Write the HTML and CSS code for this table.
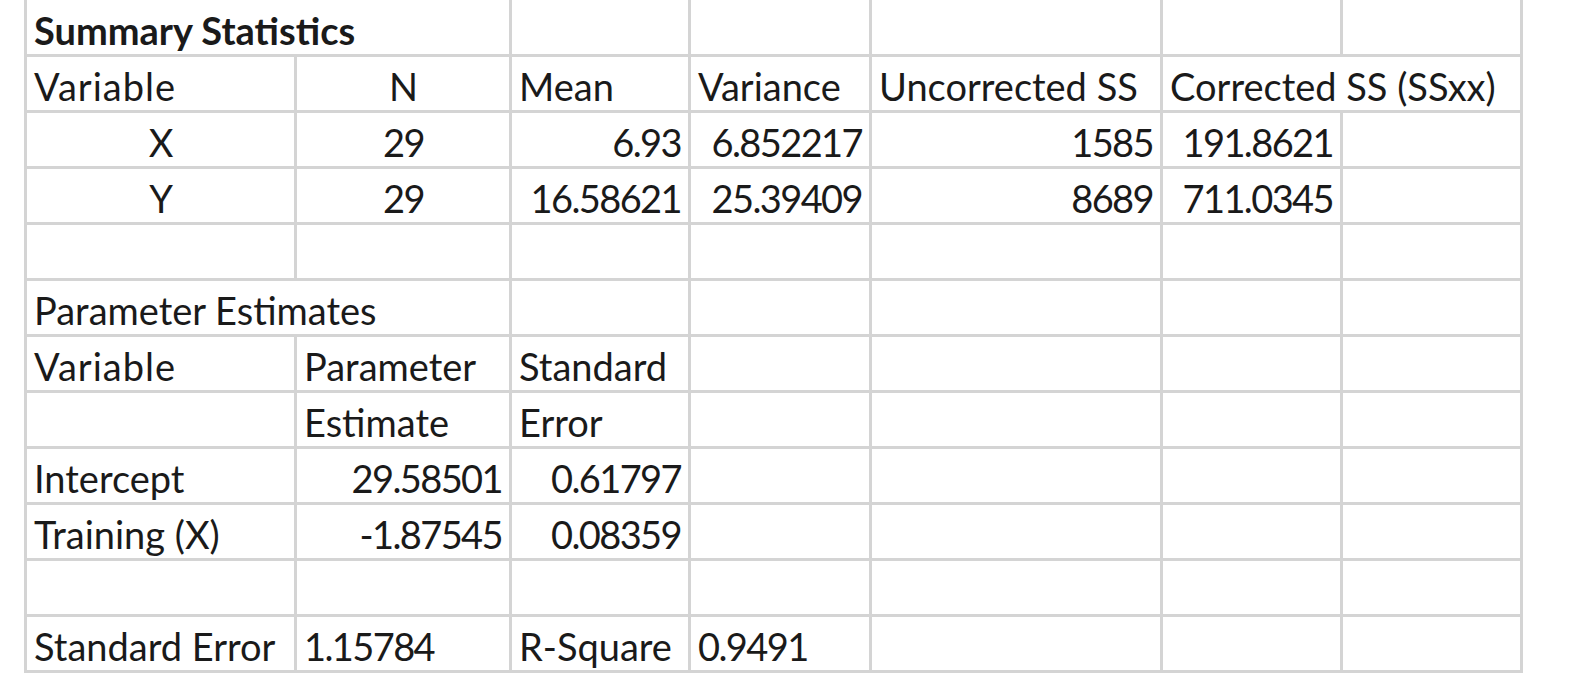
FILE: index.html
```html
<!DOCTYPE html>
<html>
<head>
<meta charset="utf-8">
<link rel="stylesheet" href="styles.css">
</head>
<body>
<div class="sheet">
  <div class="c b span2">Summary Statistics</div><div class="c"></div><div class="c"></div><div class="c"></div><div class="c"></div><div class="c"></div>

  <div class="c wide">Variable</div><div class="c ctr">N</div><div class="c">Mean</div><div class="c">Variance</div><div class="c">Uncorrected SS</div><div class="c span2">Corrected SS (SSxx)</div>

  <div class="c ctr">X</div><div class="c ctr n">29</div><div class="c r n">6.93</div><div class="c r n">6.852217</div><div class="c r n">1585</div><div class="c r n">191.8621</div><div class="c"></div>

  <div class="c ctr">Y</div><div class="c ctr n">29</div><div class="c r n">16.58621</div><div class="c r n">25.39409</div><div class="c r n">8689</div><div class="c r n">711.0345</div><div class="c"></div>

  <div class="c"></div><div class="c"></div><div class="c"></div><div class="c"></div><div class="c"></div><div class="c"></div><div class="c"></div>

  <div class="c span2">Parameter Estimates</div><div class="c"></div><div class="c"></div><div class="c"></div><div class="c"></div><div class="c"></div>

  <div class="c wide">Variable</div><div class="c">Parameter</div><div class="c">Standard</div><div class="c"></div><div class="c"></div><div class="c"></div><div class="c"></div>

  <div class="c"></div><div class="c">Estimate</div><div class="c">Error</div><div class="c"></div><div class="c"></div><div class="c"></div><div class="c"></div>

  <div class="c">Intercept</div><div class="c r n">29.58501</div><div class="c r n">0.61797</div><div class="c"></div><div class="c"></div><div class="c"></div><div class="c"></div>

  <div class="c">Training (X)</div><div class="c r n">-1.87545</div><div class="c r n">0.08359</div><div class="c"></div><div class="c"></div><div class="c"></div><div class="c"></div>

  <div class="c"></div><div class="c"></div><div class="c"></div><div class="c"></div><div class="c"></div><div class="c"></div><div class="c"></div>

  <div class="c">Standard Error</div><div class="c n">1.15784</div><div class="c">R-Square</div><div class="c n">0.9491</div><div class="c"></div><div class="c"></div><div class="c"></div>
</div>
</body>
</html>
```

FILE: styles.css
```css
html, body {
  margin: 0;
  padding: 0;
  background: #ffffff;
}

.sheet {
  margin-left: 24px;
  width: max-content;
  display: grid;
  grid-template-columns: 270px 215px 179px 181px 291px 180px 180px;
  grid-template-rows: 57px repeat(11, 56px);
  border-left: 3px solid #d4d4d4;
  font-family: Lato, "Open Sans", sans-serif;
  font-size: 38px;
  color: #1a1a1a;
}

.c {
  box-sizing: border-box;
  border-right: 3px solid #d4d4d4;
  border-bottom: 3px solid #d4d4d4;
  padding: 0 6px 5px 7px;
  display: flex;
  align-items: flex-end;
  line-height: 1;
  white-space: nowrap;
  overflow: visible;
}

.span2 {
  grid-column: span 2;
}

.b {
  font-weight: bold;
}

.r {
  justify-content: flex-end;
}

.ctr {
  justify-content: center;
}

.n {
  letter-spacing: -1.6px;
}

.r.n {
  padding-right: 7px;
}

.wide {
  letter-spacing: 1px;
}
```
